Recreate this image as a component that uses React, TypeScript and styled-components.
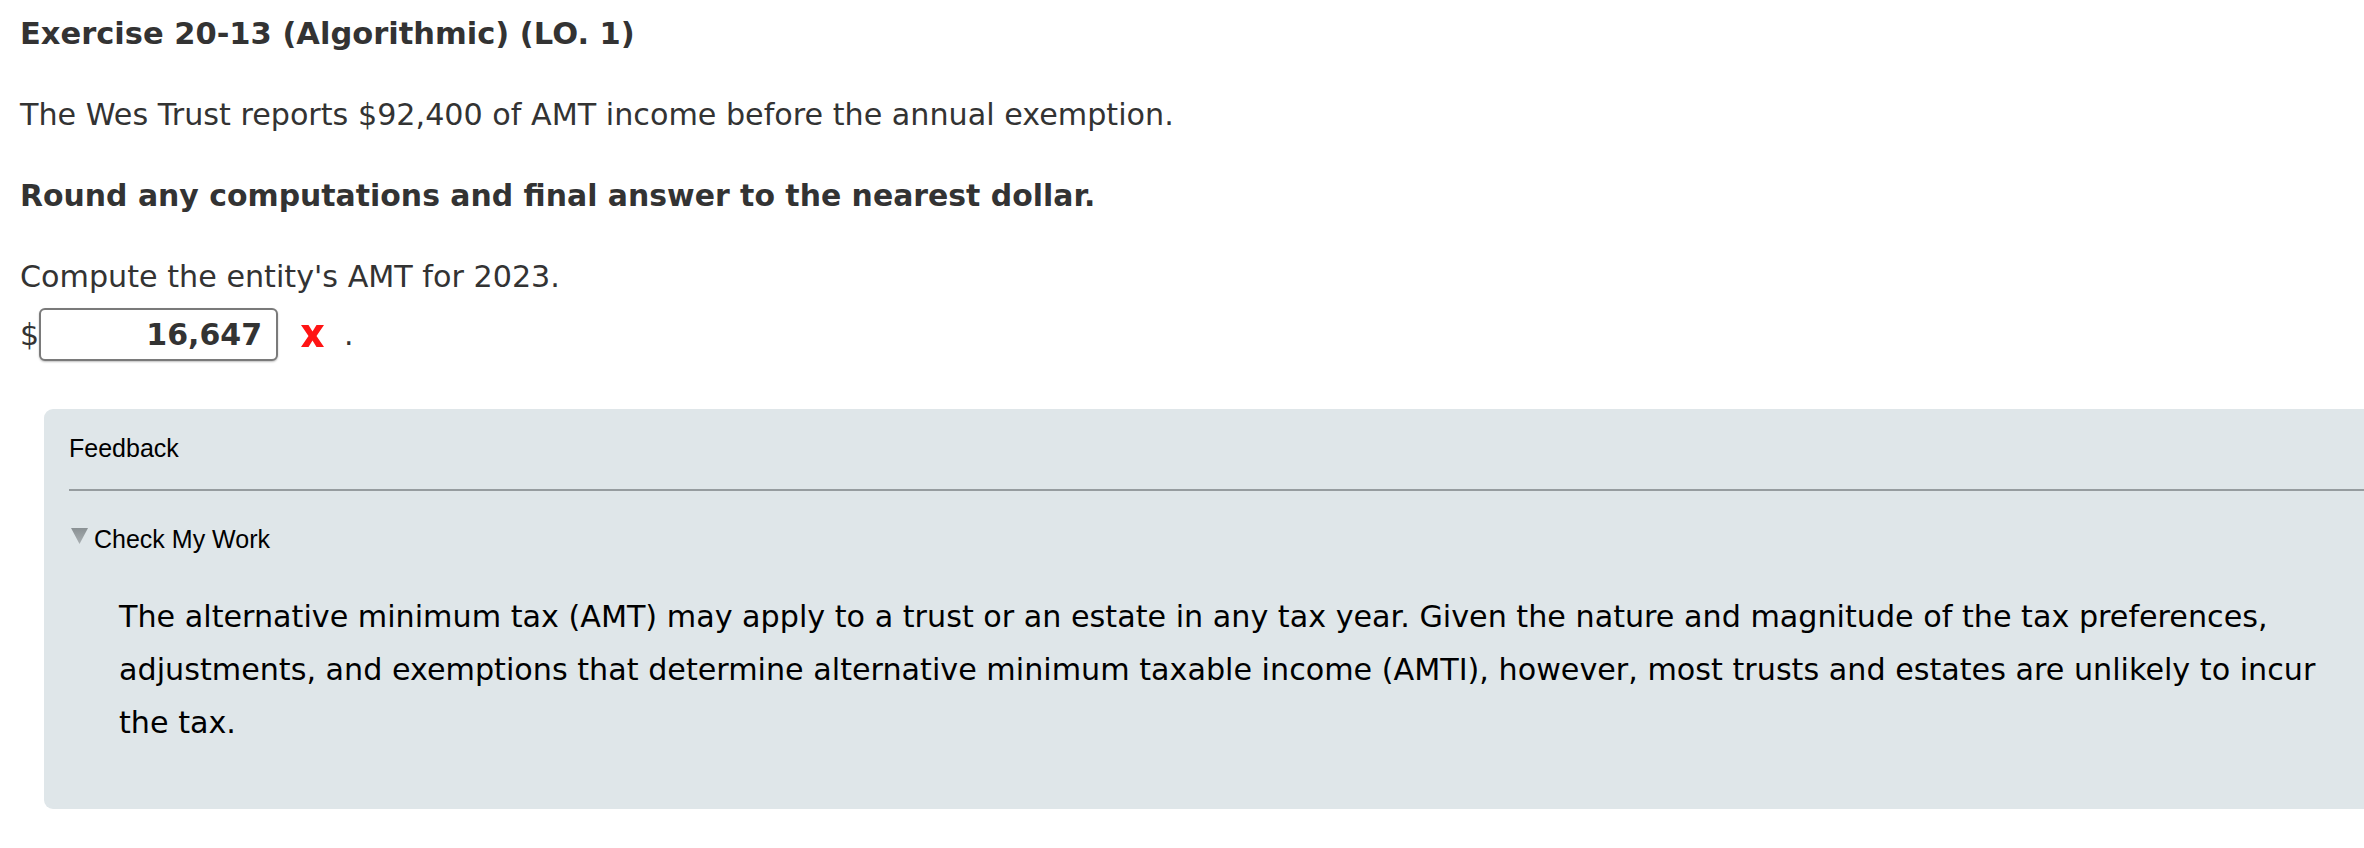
import React from "react";
import styled, { createGlobalStyle } from "styled-components";

const GlobalStyle = createGlobalStyle`
  html, body {
    margin: 0;
    padding: 0;
    background: #ffffff;
    overflow: hidden;
  }
  body {
    font-family: "DejaVu Sans", Verdana, sans-serif;
    color: #333333;
  }
`;

const Page = styled.div`
  padding: 7px 0 0 20px;
  width: 2364px;
  box-sizing: border-box;
`;

const Heading = styled.h1`
  margin: 0;
  font-size: 30.5px;
  font-weight: bold;
  line-height: 53px;
  color: #333333;
`;

const Text = styled.p<{ $bold?: boolean }>`
  margin: 28px 0 0;
  font-size: ${(p) => (p.$bold ? "29.9px" : "30.2px")};
  line-height: 53px;
  font-weight: ${(p) => (p.$bold ? "bold" : "normal")};
`;

const AnswerRow = styled.div`
  display: flex;
  align-items: center;
  margin-top: 5px;
  height: 53px;
  font-size: 30px;
`;

const Dollar = styled.span`
  line-height: 53px;
`;

const AnswerBox = styled.div`
  width: 239px;
  height: 53px;
  box-sizing: border-box;
  border: 2px solid #7a7a7a;
  border-radius: 6px;
  background: #ffffff;
  box-shadow: 0 1px 2px rgba(0, 0, 0, 0.25);
  display: flex;
  align-items: center;
  justify-content: flex-end;
  padding-right: 14px;
  font-weight: bold;
  font-size: 30px;
  color: #333333;
`;

const WrongMark = styled.svg`
  margin-left: 22px;
  width: 25px;
  height: 24px;
  margin-top: 2px;
`;

const Period = styled.span`
  margin-left: 19px;
`;

const Panel = styled.section`
  margin: 48px -40px 0 24px;
  background: #dfe6e9;
  border-radius: 9px;
  padding: 24px 0 60px 25px;
`;

const PanelTitle = styled.div`
  font-family: "Liberation Sans", Arial, sans-serif;
  font-size: 25px;
  line-height: 30px;
  color: #000000;
  padding-bottom: 26px;
  border-bottom: 2px solid #969c9f;
`;

const Toggle = styled.div`
  display: flex;
  align-items: center;
  gap: 6px;
  margin-top: 33px;
  padding-left: 2px;
  font-family: "Liberation Sans", Arial, sans-serif;
  font-size: 25px;
  line-height: 30px;
  color: #000000;
`;

const Triangle = styled.svg`
  width: 17px;
  height: 16px;
  margin-top: -6px;
`;

const Explanation = styled.p`
  margin: 36px 0 0 50px;
  max-width: 2230px;
  font-size: 30.2px;
  line-height: 53px;
  color: #000000;
`;

export default function App() {
  return (
    <>
      <GlobalStyle />
      <Page>
        <Heading>Exercise 20-13 (Algorithmic) (LO. 1)</Heading>
        <Text>The Wes Trust reports $92,400 of AMT income before the annual exemption.</Text>
        <Text $bold>Round any computations and final answer to the nearest dollar.</Text>
        <Text>Compute the entity's AMT for 2023.</Text>
        <AnswerRow>
          <Dollar>$</Dollar>
          <AnswerBox>16,647</AnswerBox>
          <WrongMark viewBox="0 0 25 24">
            <path
              d="M1 1 H8.5 L12.5 7.5 L16.5 1 H24 L16.5 12 L24 23 H16.5 L12.5 16.5 L8.5 23 H1 L8.5 12 Z"
              fill="#ff1414"
            />
          </WrongMark>
          <Period>.</Period>
        </AnswerRow>
        <Panel>
          <PanelTitle>Feedback</PanelTitle>
          <Toggle>
            <Triangle viewBox="0 0 17 16">
              <defs>
                <linearGradient id="tri" x1="0" y1="0" x2="0" y2="1">
                  <stop offset="0" stopColor="#8a9194" />
                  <stop offset="1" stopColor="#a9afb2" />
                </linearGradient>
              </defs>
              <path d="M0 0 H17 L8.5 16 Z" fill="url(#tri)" />
            </Triangle>
            Check My Work
          </Toggle>
          <Explanation>
            The alternative minimum tax (AMT) may apply to a trust or an estate in any tax year. Given the
            nature and magnitude of the tax preferences, adjustments, and exemptions that determine
            alternative minimum taxable income (AMTI), however, most trusts and estates are unlikely to
            incur the tax.
          </Explanation>
        </Panel>
      </Page>
    </>
  );
}
